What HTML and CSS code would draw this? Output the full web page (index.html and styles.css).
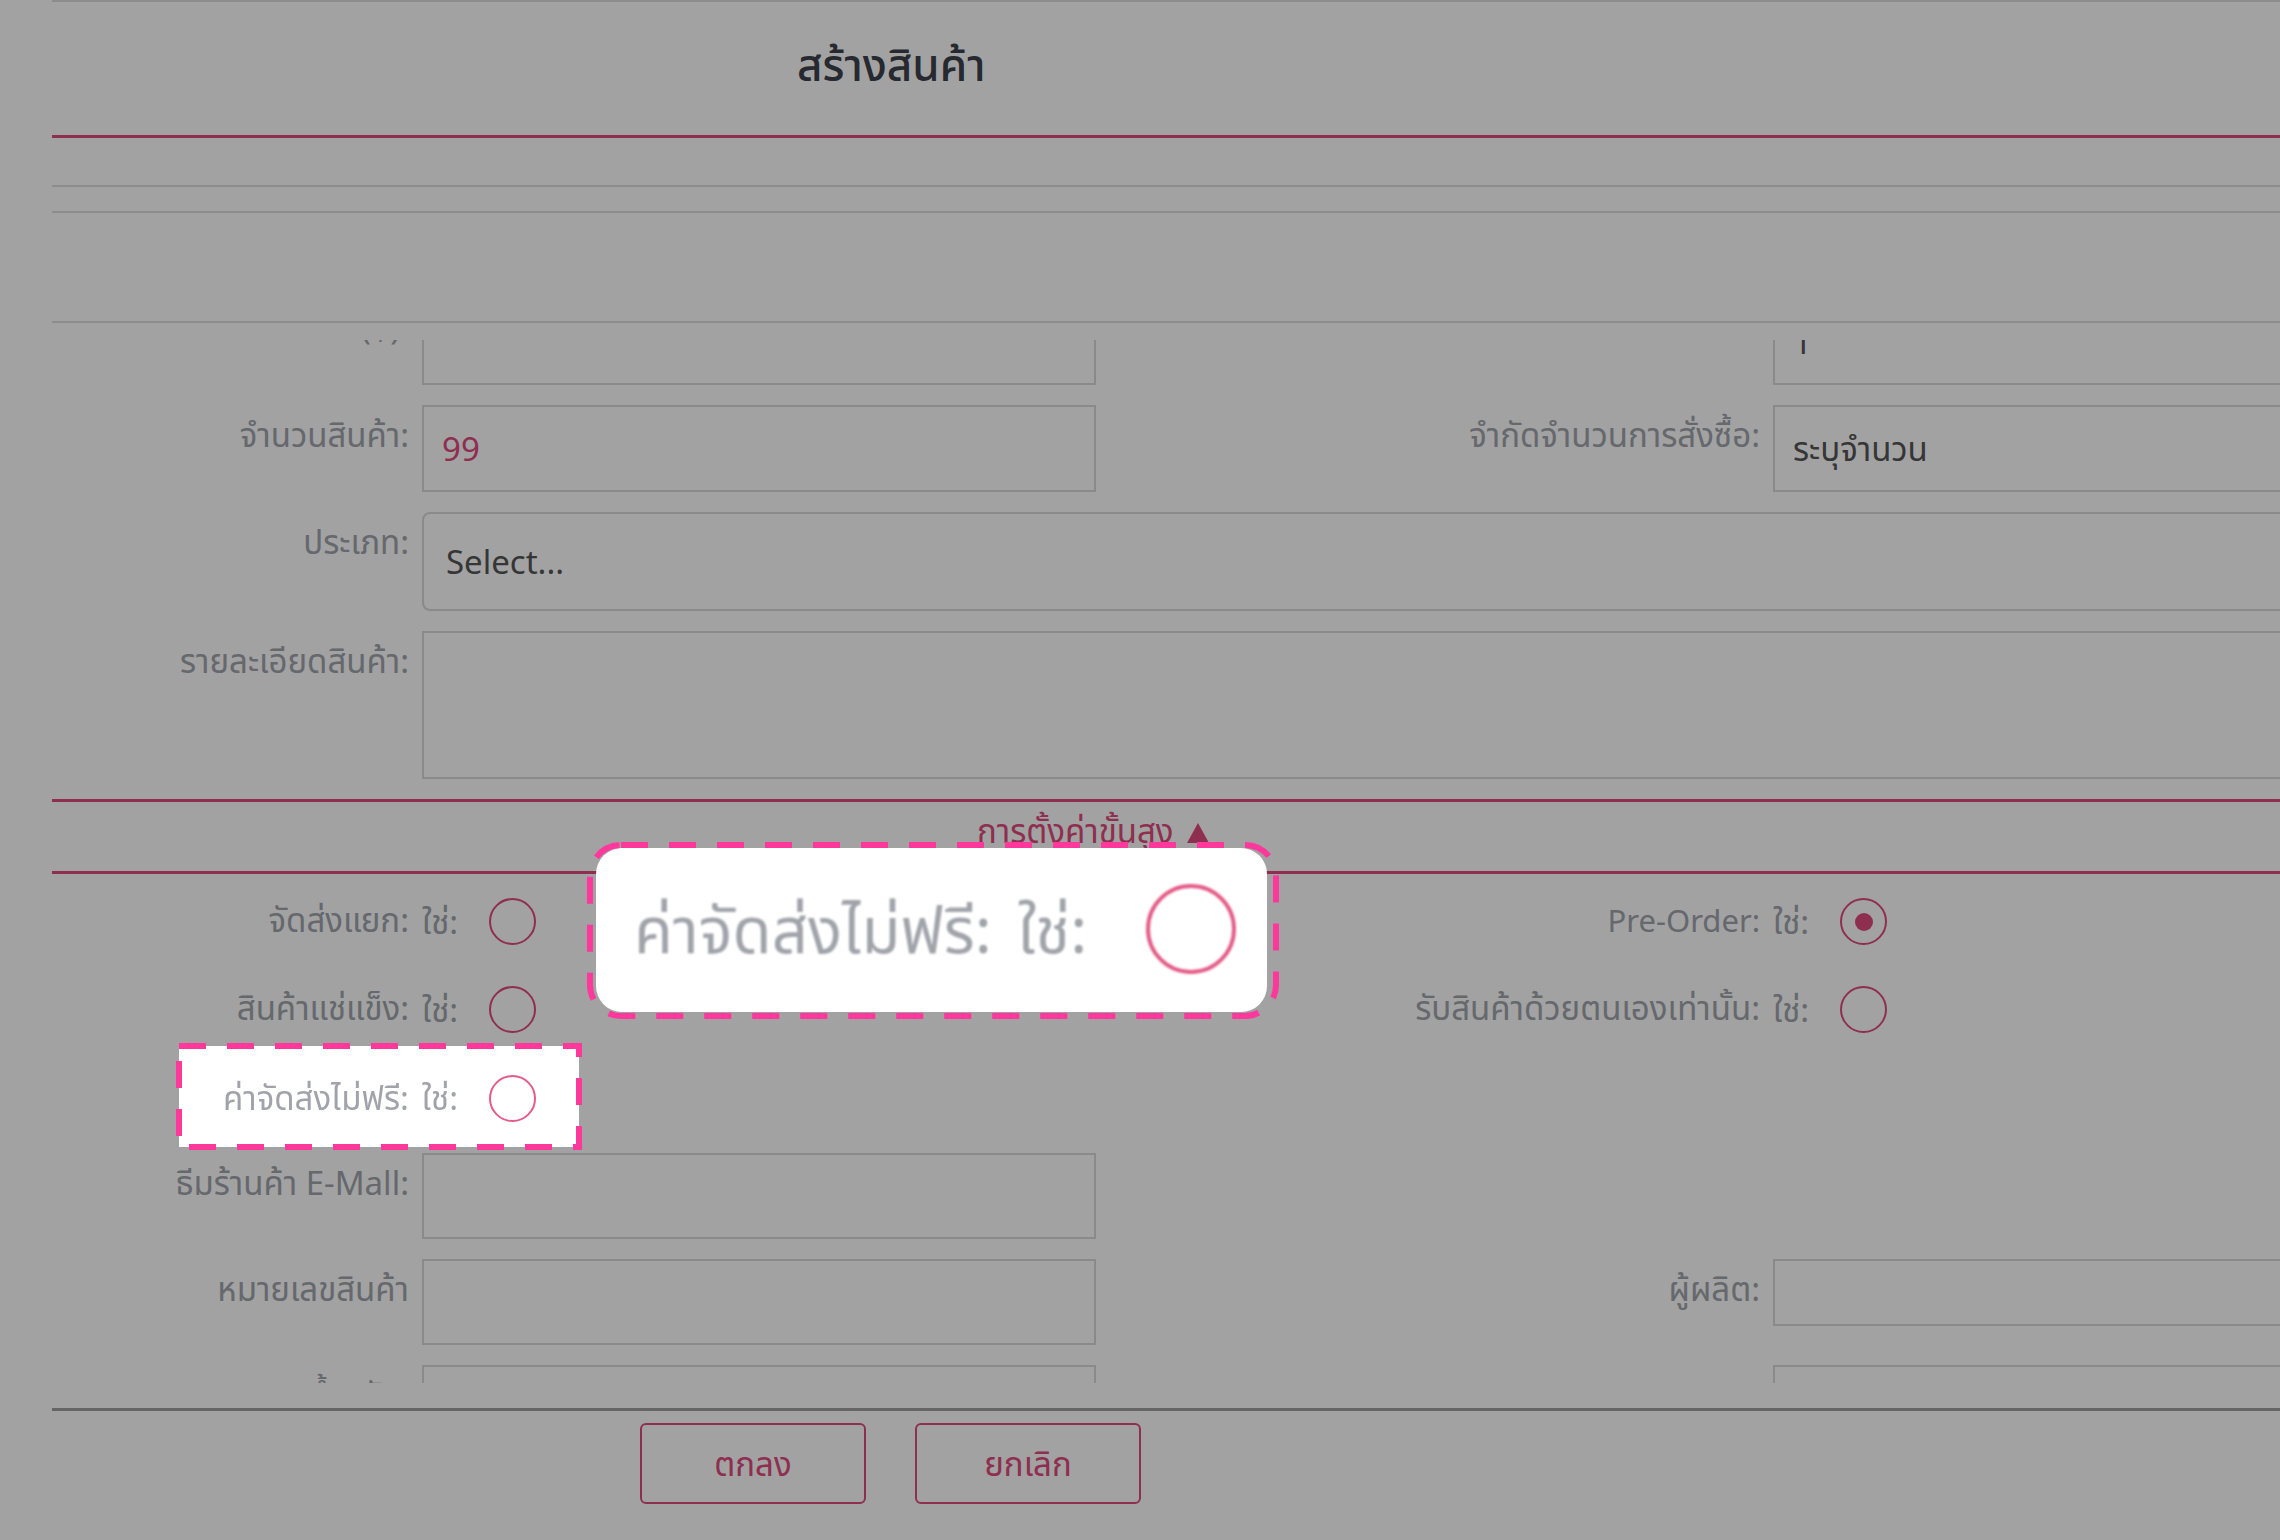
FILE: index.html
```html
<!DOCTYPE html>
<html lang="th">
<head>
<meta charset="utf-8">
<title>สร้างสินค้า</title>
<link rel="stylesheet" href="styles.css">
</head>
<body>
<div class="modal">
  <header class="modal-head"><h1 class="modal-title">สร้างสินค้า</h1></header>
  <div class="bar bar-tabs"></div>
  <div class="bar bar-sub"></div>
  <div class="bar bar-tool"></div>
  <div class="modal-body">
    <div class="scroll">
      <div class="scroll-content">
        <div class="grid">
          <span class="lbl">ราคาสินค้า (฿):</span>
          <div class="field"></div>
          <span class="lbl">จำนวนสั่งซื้อขั้นต่ำ:</span>
          <div class="field"><span class="val">1</span></div>

          <span class="lbl">จำนวนสินค้า:</span>
          <div class="field"><span class="val val-accent">99</span></div>
          <span class="lbl">จำกัดจำนวนการสั่งซื้อ:</span>
          <div class="field"><span class="val">ระบุจำนวน</span></div>

          <span class="lbl">ประเภท:</span>
          <div class="field field-select span3"><span class="val">Select...</span></div>

          <span class="lbl">รายละเอียดสินค้า:</span>
          <div class="field field-area span3"></div>
        </div>

        <div class="adv-head">
          <span>การตั้งค่าขั้นสูง</span>
          <svg class="tri" width="22" height="20" viewBox="0 0 22 20"><polygon points="11,0 22,20 0,20" fill="currentColor"/></svg>
        </div>

        <div class="radios">
          <span class="lbl lbl-mid">จัดส่งแยก:</span>
          <div class="opt"><span>ใช่:</span><span class="radio"></span></div>
          <span class="lbl lbl-mid lbl-latin">Pre-Order:</span>
          <div class="opt"><span>ใช่:</span><span class="radio radio-on"></span></div>

          <span class="lbl lbl-mid">สินค้าแช่แข็ง:</span>
          <div class="opt"><span>ใช่:</span><span class="radio"></span></div>
          <span class="lbl lbl-mid">รับสินค้าด้วยตนเองเท่านั้น:</span>
          <div class="opt"><span>ใช่:</span><span class="radio"></span></div>

          <span class="lbl lbl-mid">ค่าจัดส่งไม่ฟรี:</span>
          <div class="opt"><span>ใช่:</span><span class="radio"></span></div>
        </div>

        <div class="grid grid-lower">
          <span class="lbl">ธีมร้านค้า E-Mall:</span>
          <div class="field"></div>
          <span class="lbl"></span>
          <div></div>

          <span class="lbl">หมายเลขสินค้า</span>
          <div class="field"></div>
          <span class="lbl">ผู้ผลิต:</span>
          <div class="field field-short"></div>

          <span class="lbl">น้ำหนัก:</span>
          <div class="field"></div>
          <span class="lbl"></span>
          <div class="field"></div>
        </div>
      </div>
    </div>
  </div>
  <footer class="modal-foot">
    <button class="btn">ตกลง</button>
    <button class="btn">ยกเลิก</button>
  </footer>
</div>

<div class="dim"></div>

<div class="spot">
  <svg class="spot-frame" width="406" height="107" viewBox="0 0 406 107">
    <rect x="3" y="3" width="400" height="101" fill="#ffffff" stroke="#ff389c" stroke-width="6" stroke-dasharray="27 21"/>
  </svg>
  <div class="spot-row">
    <span class="spot-lbl">ค่าจัดส่งไม่ฟรี:</span>
    <span class="spot-lbl">ใช่:</span>
    <span class="radio radio-lit"></span>
  </div>
</div>

<div class="callout">
  <svg class="callout-frame" width="692" height="177" viewBox="0 0 692 177">
    <rect x="9" y="6" width="671" height="164" rx="26" fill="#ffffff"/>
    <rect x="3" y="3" width="686" height="171" rx="31" fill="none" stroke="#ff389c" stroke-width="6" stroke-dasharray="27 21"/>
  </svg>
  <div class="callout-row">
    <span class="callout-lbl">ค่าจัดส่งไม่ฟรี:</span>
    <span class="callout-lbl">ใช่:</span>
    <span class="callout-radio"></span>
  </div>
</div>
</body>
</html>
```

FILE: styles.css
```css
html, body {
  margin: 0;
  padding: 0;
  overflow: hidden;
  background: #ffffff;
}

body {
  width: 2280px;
  height: 1540px;
  font-family: "Noto Sans", "Noto Sans Thai", "Noto Sans Thai UI", sans-serif;
  font-size: 33px;
  color: #a0a4aa;
}

.modal {
  margin-left: 52px;
  width: 2500px;
  border-top: 2px solid #dcdcdc;
  background: #ffffff;
}

.modal-head {
  height: 133px;
  border-bottom: 3px solid #e04a7d;
  display: flex;
  align-items: flex-start;
  padding-left: 745px;
  box-sizing: content-box;
}

.modal-title {
  margin: 0;
  padding-top: 34px;
  font-size: 44px;
  line-height: 56px;
  font-weight: 500;
  color: #3c424c;
}

.bar { border-bottom: 2px solid #dcdcdc; }
.bar-tabs { height: 47px; }
.bar-sub { height: 24px; }
.bar-tool { height: 108px; }

.modal-body {
  padding-top: 17px;
  padding-bottom: 25px;
}

.scroll {
  height: 1043px;
  overflow: hidden;
}

.scroll-content {
  margin-top: -42px;
}

.grid {
  display: grid;
  grid-template-columns: 357px 674px 651px 674px;
  column-gap: 13px;
  row-gap: 20px;
}

.lbl {
  text-align: right;
  padding-top: 9px;
  line-height: 42px;
  white-space: nowrap;
  color: #a0a4aa;
}

.lbl-mid {
  padding-top: 0;
  align-self: center;
}

.lbl-latin {
  font-size: 31px;
}

.field {
  box-sizing: border-box;
  height: 87px;
  border: 2px solid #d9d9d9;
  display: flex;
  align-items: center;
  padding-left: 18px;
  line-height: 42px;
  background: #ffffff;
}

.field-select {
  height: 99px;
  border-radius: 8px;
  padding-left: 22px;
}

.field-area {
  height: 148px;
}

.field-short {
  height: 67px;
}

.span3 { grid-column: 2 / 5; }

.val { color: #555555; }
.val-accent { color: #e04a7d; }

.adv-head {
  margin-top: 20px;
  border-top: 3px solid #e04a7d;
  border-bottom: 3px solid #e04a7d;
  display: flex;
  align-items: flex-start;
  gap: 13px;
  padding-left: 925px;
  padding-top: 8px;
  box-sizing: content-box;
  height: 61px;
  line-height: 42px;
  color: #e04a7d;
}

.tri { margin-top: 13px; }

.radios {
  padding-top: 2px;
  display: grid;
  grid-template-columns: 357px 674px 651px 674px;
  column-gap: 13px;
  grid-auto-rows: 88px;
}

.opt {
  display: flex;
  align-items: center;
  gap: 31px;
  line-height: 42px;
  padding-top: 3px;
}

.radio {
  box-sizing: border-box;
  width: 47px;
  height: 47px;
  border: 2px solid #e04a7d;
  border-radius: 50%;
  display: flex;
  align-items: center;
  justify-content: center;
  background: #ffffff;
  flex: none;
}

.radio-on::after {
  content: "";
  width: 18px;
  height: 18px;
  border-radius: 50%;
  background: #e04a7d;
}

.grid-lower {
  margin-top: 13px;
}

.grid-lower .field { height: 86px; }
.grid-lower .field-short { height: 67px; }

.modal-foot {
  border-top: 3px solid #a0a0a0;
  padding-top: 12px;
  padding-left: 588px;
  display: flex;
  gap: 49px;
  height: 140px;
}

.btn {
  box-sizing: border-box;
  width: 226px;
  height: 81px;
  border: 2px solid #e04a7d;
  border-radius: 6px;
  background: #ffffff;
  color: #e04a7d;
  font-family: "Noto Sans", "Noto Sans Thai", sans-serif;
  font-size: 33px;
  line-height: 42px;
  padding: 0;
}

.dim {
  position: fixed;
  left: 0;
  top: 0;
  width: 2280px;
  height: 1540px;
  background: rgba(0, 0, 0, 0.365);
}

.spot {
  position: absolute;
  left: 176px;
  top: 1043px;
  width: 406px;
  height: 107px;
}

.spot-frame {
  position: absolute;
  left: 0;
  top: 0;
}

.spot-row {
  position: relative;
  height: 100%;
  display: flex;
  align-items: center;
  justify-content: flex-end;
  padding-right: 46px;
  padding-top: 3px;
  box-sizing: border-box;
  line-height: 42px;
}

.spot-lbl { color: #a0a4aa; margin-right: 13px; white-space: nowrap; }
.spot-lbl + .spot-lbl { margin-right: 31px; }

.radio-lit { border-color: #e45c88; }

.callout {
  position: absolute;
  left: 587px;
  top: 842px;
  width: 692px;
  height: 177px;
}

.callout-frame {
  position: absolute;
  left: 0;
  top: 0;
}

.callout-row {
  position: relative;
  height: 100%;
  display: flex;
  align-items: center;
  padding-left: 47px;
  padding-bottom: 4px;
  box-sizing: border-box;
  filter: blur(0.9px);
}

.callout-lbl {
  font-size: 63.5px;
  line-height: 80px;
  color: #a0a4aa;
  margin-right: 26px;
  white-space: nowrap;
}

.callout-lbl + .callout-lbl { margin-right: 59px; }

.callout-radio {
  box-sizing: border-box;
  width: 90px;
  height: 90px;
  border: 4px solid #e45c88;
  border-radius: 50%;
  flex: none;
}
```
